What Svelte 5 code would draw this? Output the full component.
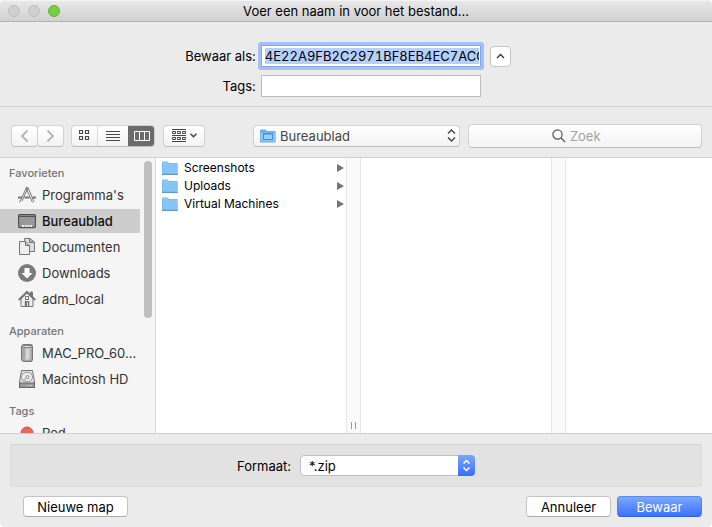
<script lang="ts">
  type Place = { name: string; icon: string };

  const sections: { title: string; places: Place[] }[] = [
    {
      title: 'Favorieten',
      places: [
        { name: "Programma's", icon: 'apps' },
        { name: 'Bureaublad', icon: 'desktop' },
        { name: 'Documenten', icon: 'documents' },
        { name: 'Downloads', icon: 'downloads' },
        { name: 'adm_local', icon: 'home' },
      ],
    },
    {
      title: 'Apparaten',
      places: [
        { name: 'MAC_PRO_60...', icon: 'macpro' },
        { name: 'Macintosh HD', icon: 'disk' },
      ],
    },
    { title: 'Tags', places: [{ name: 'Red', icon: 'tag' }] },
  ];

  const folders = ['Screenshots', 'Uploads', 'Virtual Machines'];

  let filename = $state('4E22A9FB2C2971BF8EB4EC7ACC');
  let tags = $state('');
  let query = $state('');
  let current = $state('Bureaublad');
  let view = $state('columns');
</script>

{#snippet folder()}
  <svg class="folder" width="16" height="14" viewBox="0 0 16 14" aria-hidden="true">
    <path d="M0 1.500Q0 .5 1 .5H5.500L7 2H15.500V13H0Z" fill="#6aaee2" />
    <path d="M.5 1H5.300L6.700 2.500H15V4H.5Z" fill="#8cc6f2" />
    <path d="M.5 4H15.500V12.500H.5Z" fill="#88c3f7" />
    <path d="M0 13.500H16" stroke="#6199c6" />
  </svg>
{/snippet}

{#snippet placeIcon(name: string)}
  <svg width="18" height="18" viewBox="0 0 18 18" fill="none" stroke="#777" aria-hidden="true">
    {#if name === 'apps'}
      <path d="M8.500 1.500 2.500 14.500M10 2 4 15" />
      <path d="M8 1.500H10L16 15.500M8 2 14.500 16.500" />
      <path d="M0 11.500H4M6.500 11.500H11.500M14.500 11.500H18" stroke-width="1.800" />
      <path d="M1.500 16.500 2.500 14" />
    {:else if name === 'desktop'}
      <rect x=".6" y="2.600" width="16.800" height="13" rx="1.200" fill="#999" stroke="#4f4f4f" stroke-width="1.200" />
      <path d="M1 4.500H17" stroke="#555" />
      <path d="M4 14H14" stroke="#eee" stroke-width="2" stroke-dasharray="2 .7" />
    {:else if name === 'documents'}
      <path d="M6.500 4.500V.5H12L16.500 4V13.500H11" fill="#ddd" />
      <path d="M11.500.5V4.500H16.500" fill="#aaa" />
      <path d="M1.500 3.500H7.500L11.500 7V16.500H1.500Z" fill="#eee" />
      <path d="M7.500 3.500V7.500H11.500" fill="#bbb" />
    {:else if name === 'downloads'}
      <circle cx="9" cy="9" r="9" fill="#7b7b7b" stroke="none" />
      <path d="M6.500 4H11.500V9H14.500L9 14.500 3.500 9H6.500Z" fill="#fff" stroke="none" />
    {:else if name === 'home'}
      <path d="M12.500 5V2H14.500V7" fill="#777" />
      <path d="M3 9V16.500H15V9L9 3Z" fill="#eee" />
      <path d="M.7 10 9 1.700 17.300 10" stroke-width="1.800" />
      <rect x="7.500" y="6.500" width="3" height="3" fill="#fff" />
      <rect x="6.800" y="11" width="4.500" height="6" fill="#777" stroke="none" />
      <path d="M9.500 12V16" stroke="#ddd" />
    {:else if name === 'macpro'}
      <rect x="3.600" y=".6" width="10.800" height="16.800" rx="2.500" fill="#b4b4b4" stroke="#777" stroke-width="1.200" />
      <path d="M6 4V15" stroke="#999" />
      <path d="M9.500 4V15.500" stroke="#d6d6d6" stroke-width="4" />
      <ellipse cx="9" cy="2.500" rx="4.500" ry="1.300" fill="#ddd" stroke="#777" />
    {:else if name === 'disk'}
      <path d="M3.500.5H14.500L16.500 12V17.500H1.500V12Z" fill="#ddd" stroke="#777" />
      <rect x="1.500" y="13" width="15" height="4.500" fill="#999" stroke="#666" />
      <ellipse cx="9" cy="7" rx="5.500" ry="4.700" fill="#eee" stroke="#999" />
      <circle cx="9.500" cy="7" r="1.500" stroke="#888" />
      <path d="M5 11 8 8.500" stroke="#888" />
      <path d="M9 15.500H15" stroke="#ddd" stroke-dasharray="1 1" />
    {:else}
      <circle cx="9" cy="9" r="6" fill="#e96857" stroke="#cf5140" />
    {/if}
  </svg>
{/snippet}

<div class="dialog">
  <header class="titlebar">
    <div class="lights">
      <button class="light" aria-label="Sluit" disabled></button>
      <button class="light" aria-label="Minimaliseer" disabled></button>
      <button class="light zoom" aria-label="Vergroot"></button>
    </div>
    <h1>Voer een naam in voor het bestand...</h1>
  </header>

  <div class="naming">
    <label for="filename">Bewaar als:</label>
    <input id="filename" class="filename" type="text" bind:value={filename} />
    <button class="collapse" aria-label="Minder opties">
      <svg width="9" height="6" viewBox="0 0 9 6" aria-hidden="true">
        <path d="M1 5 4.500 1.500 8 5" fill="none" stroke="#333" stroke-width="1.300" />
      </svg>
    </button>
    <label for="tags">Tags:</label>
    <input id="tags" type="text" bind:value={tags} />
  </div>

  <div class="toolbar">
    <div class="nav">
      <button class="tool" aria-label="Vorige">
        <svg width="9" height="14" viewBox="0 0 9 14" aria-hidden="true">
          <path d="M7.500 1.500 2 7 7.500 12.500" fill="none" stroke="#b4b4b4" stroke-width="1.800" />
        </svg>
      </button>
      <button class="tool" aria-label="Volgende">
        <svg width="9" height="14" viewBox="0 0 9 14" aria-hidden="true">
          <path d="M1.500 1.500 7 7 1.500 12.500" fill="none" stroke="#b4b4b4" stroke-width="1.800" />
        </svg>
      </button>
    </div>

    <div class="views">
      <button class:active={view === 'icons'} aria-label="Symbolen" onclick={() => (view = 'icons')}>
        <svg width="11" height="11" viewBox="0 0 11 11" fill="none" stroke="currentColor" aria-hidden="true">
          <path d="M.5.5H3.500V3.500H.5ZM6.500.5H9.500V3.500H6.500ZM.5 6.500H3.500V9.500H.5ZM6.500 6.500H9.500V9.500H6.500Z" stroke-width="1.200" />
        </svg>
      </button>
      <button class:active={view === 'list'} aria-label="Lijst" onclick={() => (view = 'list')}>
        <svg width="14" height="10" viewBox="0 0 14 10" stroke="currentColor" aria-hidden="true">
          <path d="M0 .5H14M0 3.500H14M0 6.500H14M0 9.500H14" />
        </svg>
      </button>
      <button class:active={view === 'columns'} aria-label="Kolommen" onclick={() => (view = 'columns')}>
        <svg width="16" height="10" viewBox="0 0 16 10" fill="none" stroke="currentColor" aria-hidden="true">
          <path d="M.5.5H15.500V9.500H.5ZM5.500.5V9.500M10.500.5V9.500" />
        </svg>
      </button>
    </div>

    <button class="tool group" aria-label="Groepeer">
      <svg width="14" height="13" viewBox="0 0 14 13" fill="none" stroke="#444" aria-hidden="true">
        <path d="M0 .5H14M0 6.500H14M0 12.500H14" />
        <path d="M.5 2.500H3.500V4.500H.5ZM5.500 2.500H8.500V4.500H5.500ZM10.500 2.500H13.500V4.500H10.500ZM.5 8.500H3.500V10.500H.5ZM5.500 8.500H8.500V10.500H5.500ZM10.500 8.500H13.500V10.500H10.500Z" />
      </svg>
      <svg width="7" height="5" viewBox="0 0 7 5" aria-hidden="true">
        <path d="M.5.700 3.500 3.700 6.500.7" fill="none" stroke="#444" stroke-width="1.500" />
      </svg>
    </button>

    <div class="path">
      <svg class="path-icon" width="16" height="14" viewBox="0 0 16 14" aria-hidden="true">
        <path d="M0 1.500Q0 .5 1 .5H5.500L7 2H15.500V13.500H0Z" fill="#69aee8" />
        <path d="M.5 3.500H15.500V12.500H.5Z" fill="#8bc5f8" />
        <rect x="3.500" y="4.500" width="9" height="6" fill="#9bcfff" stroke="#458fd3" />
        <path d="M3.500 5H12.500" stroke="#458fd3" />
      </svg>
      <select aria-label="Locatie" bind:value={current}>
        <option>Bureaublad</option>
      </select>
      <svg class="arrows" width="9" height="13" viewBox="0 0 9 13" aria-hidden="true">
        <path d="M1 4.500 4.500 1 8 4.500M1 8.500 4.500 12 8 8.500" fill="none" stroke="#444" stroke-width="1.400" />
      </svg>
    </div>

    <div class="search">
      <svg width="14" height="14" viewBox="0 0 14 14" fill="none" stroke="#555" aria-hidden="true">
        <circle cx="5.500" cy="5.500" r="4.600" stroke-width="1.200" />
        <path d="M9 9 13 13" stroke-width="1.300" />
      </svg>
      <input type="search" placeholder="Zoek" aria-label="Zoek" bind:value={query} />
    </div>
  </div>

  <div class="browser">
    <nav class="sidebar">
      <div class="places">
        {#each sections as section (section.title)}
          <h2>{section.title}</h2>
          <ul>
            {#each section.places as place (place.name)}
              <li>
                <button class:selected={place.name === current}>
                  {@render placeIcon(place.icon)}
                  <span>{place.name}</span>
                </button>
              </li>
            {/each}
          </ul>
        {/each}
      </div>
      <div class="scroller"></div>
    </nav>

    <ul class="column">
      {#each folders as name (name)}
        <li>
          {@render folder()}
          <span>{name}</span>
          <svg class="more" width="7" height="8" viewBox="0 0 7 8" aria-hidden="true">
            <path d="M0 0 7 4 0 8Z" fill="#757575" />
          </svg>
        </li>
      {/each}
    </ul>
    <div class="divider"><i></i></div>
    <div class="column"></div>
    <div class="divider"></div>
    <div class="preview"></div>
  </div>

  <footer>
    <div class="format">
      <label for="format">Formaat:</label>
      <div class="popup">
        <select id="format">
          <option>*.zip</option>
        </select>
        <span class="cap">
          <svg width="9" height="13" viewBox="0 0 9 13" aria-hidden="true">
            <path d="M1.500 4.500 4.500 1.500 7.500 4.500M1.500 8.500 4.500 11.500 7.500 8.500" fill="none" stroke="#fff" stroke-width="1.500" />
          </svg>
        </span>
      </div>
    </div>
    <div class="actions">
      <button class="push new">Nieuwe map</button>
      <button class="push">Annuleer</button>
      <button class="push primary">Bewaar</button>
    </div>
  </footer>
</div>

<style>
  :global(body) {
    background: #fff;
  }
  .dialog {
    box-sizing: border-box;
    display: flex;
    flex-direction: column;
    height: 100vh;
    min-height: 400px;
    background: #ebebeb;
    border-radius: 5px;
    overflow: hidden;
    font: 13px/16px Inter, 'Liberation Sans', sans-serif;
    color: #000;
  }
  .dialog *,
  .dialog *::after {
    box-sizing: border-box;
  }
  button,
  input,
  select {
    margin: 0;
    padding: 0;
    border: 0;
    outline: 0;
    font: inherit;
    color: inherit;
    appearance: none;
  }
  ul {
    margin: 0;
    padding: 0;
    list-style: none;
  }
  svg {
    display: block;
    flex: none;
  }

  .titlebar {
    display: grid;
    flex: none;
    grid-template-columns: 1fr auto 1fr;
    align-items: center;
    height: 22px;
    padding: 0 8px;
    background: linear-gradient(#e9e9e9, #d1d1d1);
    border-bottom: 1px solid #b2b2b2;
    box-shadow: inset 0 1px #f5f5f5;
  }
  .lights {
    display: flex;
    gap: 8px;
  }
  .light {
    width: 12px;
    height: 12px;
    border: 1px solid #bcbcbc;
    border-radius: 50%;
    background: #d0d0d0;
  }
  .light.zoom {
    border-color: #5fb331;
    background: #78cd43;
  }
  h1 {
    margin: 0;
    font-size: 13px;
    font-weight: 400;
  }

  .naming {
    display: grid;
    grid-template-columns: auto 220px 30px;
    justify-content: center;
    align-items: center;
    row-gap: 8px;
    padding: 23px 16px 9px 0;
    border-bottom: 1px solid #d2d2d2;
  }
  .naming label {
    margin-right: 5px;
    text-align: right;
  }
  .naming input {
    height: 22px;
    padding: 2px 1px 2px 3px;
    background: #fff;
    border: 1px solid #bcbcbc;
  }
  .naming .filename {
    background: linear-gradient(#b5d0fd, #b5d0fd) content-box, #fff;
    border-color: #83a4e6;
    box-shadow: 0 0 0 3px #a6bff4;
    border-radius: 1px;
    font-variant-numeric: tabular-nums;
  }
  .collapse {
    display: grid;
    place-items: center;
    width: 21px;
    height: 21px;
    margin-left: 9px;
    background: #fff;
    border: 1px solid #c4c4c4;
    border-radius: 4px;
  }

  .toolbar {
    display: flex;
    flex: none;
    align-items: center;
    gap: 8px;
    height: 51px;
    padding: 7px 10px 0 11px;
    border-bottom: 1px solid #cfcfcf;
  }
  .nav,
  .views {
    display: flex;
  }
  .nav {
    margin-right: -1px;
  }
  .tool,
  .views,
  .path select,
  .search input {
    height: 22px;
    background: linear-gradient(#fff, #f3f3f3);
    border: 1px solid #d2d2d2;
    border-bottom-color: #bdbdbd;
    border-radius: 4px;
  }
  .tool {
    display: flex;
    align-items: center;
    justify-content: center;
    gap: 4px;
    width: 27px;
  }
  .tool + .tool {
    margin-left: -1px;
  }
  .views {
    overflow: hidden;
  }
  .views button {
    display: grid;
    place-items: center;
    width: 25px;
    background: none;
    color: #4a4a4a;
  }
  .views button + button {
    width: 31px;
    border-left: 1px solid #d8d8d8;
  }
  .views button + button + button {
    width: 26px;
  }
  .views .active {
    background: #6b6b6b;
    border-color: #6b6b6b;
    color: #fff;
  }
  .tool.group {
    width: 42px;
  }
  .path {
    position: relative;
    flex: 207;
    margin-left: 40px;
  }
  .path select {
    display: block;
    width: 100%;
    padding: 0 24px 0 26px;
    color: #444;
  }
  .path-icon,
  .arrows {
    position: absolute;
    top: 4px;
    left: 7px;
    pointer-events: none;
  }
  .arrows {
    left: auto;
    right: 4px;
  }
  .search {
    position: relative;
    flex: 233;
  }
  .search input {
    display: block;
    width: 100%;
    height: 24px;
    text-align: center;
  }
  .search input::placeholder {
    color: #a2a2a2;
  }
  .search input::-webkit-search-cancel-button {
    display: none;
  }
  .search svg {
    position: absolute;
    top: 5px;
    left: calc(50% - 33px);
  }

  .browser {
    display: flex;
    flex: 1;
    min-height: 0;
    background: #fff;
    overflow: hidden;
  }
  .sidebar {
    display: flex;
    width: 156px;
    background: #f5f5f5;
    border-right: 1px solid #dadada;
  }
  .places {
    width: 140px;
    padding-top: 7px;
  }
  .scroller {
    width: 8px;
    height: 157px;
    margin: 3px 0 0 4px;
    border-radius: 4px;
    background: #bfbfbf;
  }
  h2 {
    margin: 0 0 2px;
    padding-left: 9px;
    font-size: 11px;
    font-weight: 500;
    color: #747474;
  }
  .places ul {
    display: flex;
    flex-direction: column;
    gap: 2px;
    margin-bottom: 12px;
  }
  .places button {
    display: flex;
    align-items: center;
    gap: 6px;
    width: 100%;
    height: 24px;
    padding-left: 18px;
    background: none;
    color: #333;
    white-space: nowrap;
  }
  .places .selected {
    background: #cdcdcd;
    color: #111;
    font-weight: 500;
  }
  .column {
    width: 190px;
    padding-top: 1px;
    font-size: 12px;
  }
  .column li {
    display: flex;
    align-items: center;
    gap: 6px;
    height: 18px;
    padding: 0 2px 0 6px;
  }
  .more {
    margin-left: auto;
  }
  .divider {
    display: flex;
    align-items: flex-end;
    justify-content: center;
    width: 15px;
    padding-bottom: 4px;
    background: #fafafa;
    border: 1px solid #e6e6e6;
    border-width: 0 1px;
  }
  .divider i {
    width: 5px;
    height: 7px;
    border: 1px solid #999;
    border-width: 0 1px;
  }
  .preview {
    flex: 1;
  }

  footer {
    padding: 10px;
    border-top: 1px solid #cfcfcf;
  }
  .format {
    display: flex;
    align-items: center;
    justify-content: center;
    gap: 9px;
    height: 43px;
    background: #e2e2e2;
    border: 1px solid #dcdcdc;
    border-top-color: #d2d2d2;
    border-radius: 3px;
  }
  .popup {
    position: relative;
    width: 175px;
  }
  .popup select {
    display: block;
    width: 100%;
    height: 21px;
    padding: 0 26px 0 8px;
    background: #fff;
    border: 1px solid #bfbfbf;
    border-radius: 4px;
  }
  .cap {
    position: absolute;
    inset: 0 0 0 auto;
    display: grid;
    place-items: center;
    width: 17px;
    border-radius: 0 4px 4px 0;
    background: linear-gradient(#7aa7fb, #3b6cfb);
    pointer-events: none;
  }
  .actions {
    display: flex;
    gap: 6px;
    padding: 9px 0 0 13px;
  }
  .push {
    width: 85px;
    height: 21px;
    background: #fff;
    border: 1px solid #c4c4c4;
    border-bottom-color: #aaa;
    border-radius: 4px;
  }
  .push.new {
    width: 105px;
    margin-right: auto;
  }
  .push.primary {
    background: linear-gradient(#7aa8fb, #3e6ffc);
    border-color: #5c8bf0 #5080f5 #3360e5;
    color: #fff;
  }
</style>
